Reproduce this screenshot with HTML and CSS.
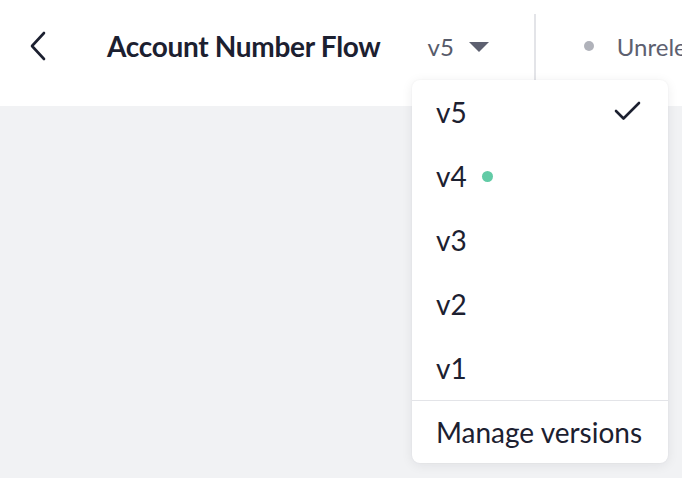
FILE: index.html
```html
<!DOCTYPE html>
<html>
<head>
<meta charset="utf-8">
<link rel="stylesheet" href="styles.css">
</head>
<body>
<header class="topbar">
  <button class="back" aria-label="Back">
    <svg width="18" height="30" viewBox="0 0 18 30"><path d="M15 2 L3 15 L15 28" fill="none" stroke="#1c2030" stroke-width="2.6" stroke-linecap="round" stroke-linejoin="round"/></svg>
  </button>
  <h1 class="title">Account Number Flow</h1>
  <div class="version-select">
    <span>v5</span>
    <svg width="20" height="10" viewBox="0 0 20 10"><path d="M0 0 H20 L10 10 Z" fill="#5d6070"/></svg>
  </div>
  <div class="divider"></div>
  <div class="status"><span class="status-dot"></span><span>Unreleased changes</span></div>
</header>
<main class="canvas"></main>
<div class="menu">
  <div class="item"><span>v5</span><svg class="check" width="28" height="22" viewBox="0 0 28 22"><path d="M2 11 L9.5 18.5 L25 3" fill="none" stroke="#1c2030" stroke-width="2.6" stroke-linecap="round" stroke-linejoin="round"/></svg></div>
  <div class="item"><span>v4</span><span class="live-dot"></span></div>
  <div class="item"><span>v3</span></div>
  <div class="item"><span>v2</span></div>
  <div class="item"><span>v1</span></div>
  <div class="item manage"><span>Manage versions</span></div>
</div>
</body>
</html>
```
FILE: styles.css
```css
* { box-sizing: border-box; }
html, body { margin: 0; padding: 0; height: 100%; }
body {
  font-family: Lato, "Open Sans", sans-serif;
  color: #1c2030;
  background: #f1f2f4;
  overflow: hidden;
  position: relative;
}
.topbar {
  height: 106px;
  background: #fff;
  display: flex;
  align-items: center;
  white-space: nowrap;
  overflow: hidden;
  padding-bottom: 14px;
}
.topbar > * { flex-shrink: 0; }
.back {
  border: 0;
  background: none;
  padding: 0;
  margin-left: 29px;
  width: 18px;
  height: 30px;
  display: flex;
}
.title {
  margin: 0 0 0 60px;
  font-size: 28px;
  font-weight: 700;
  letter-spacing: -0.3px;
}
.version-select {
  margin-left: 47px;
  display: flex;
  align-items: center;
  gap: 15px;
  font-size: 24px;
  color: #575b6a;
}
.version-select svg { margin-top: 2px; }
.divider {
  width: 2px;
  align-self: stretch;
  margin: 14px 0 -14px 45px;
  background: #e3e4e8;
}
.status {
  display: flex;
  align-items: center;
  margin-left: 48px;
  font-size: 24px;
  color: #5d6070;
}
.status-dot {
  width: 10px;
  height: 10px;
  border-radius: 50%;
  background: #b0b2ba;
  margin-right: 23px;
}
.canvas { height: calc(100% - 106px); }
.menu {
  position: absolute;
  left: 412px;
  top: 80px;
  width: 256px;
  background: #fff;
  border-radius: 8px;
  box-shadow: 0 2px 12px rgba(20, 25, 40, 0.08), 0 0 2px rgba(20, 25, 40, 0.05);
  overflow: hidden;
}
.item {
  height: 64px;
  display: flex;
  align-items: center;
  padding: 0 24px;
  font-size: 28px;
}
.check { margin-left: auto; margin-right: 2px; margin-top: -2px; }
.live-dot {
  width: 11px;
  height: 11px;
  border-radius: 50%;
  background: #62cba6;
  margin-left: 15px;
}
.manage {
  border-top: 1px solid #e3e4e8;
  height: 63px;
}
```
